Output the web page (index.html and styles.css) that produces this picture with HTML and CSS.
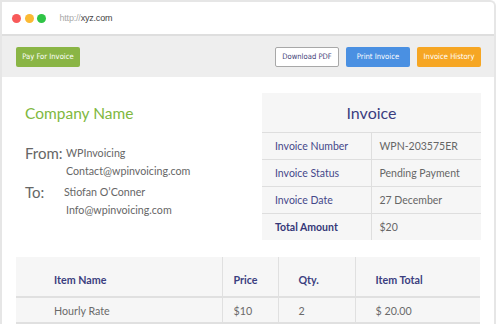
FILE: index.html
```html
<!DOCTYPE html>
<html>
    <head>
        <meta name="viewport" content="width=device-width, initial-scale=1.0">
        <link rel="stylesheet" href="styles.css">
    </head>
    <body>
        <div class="window">
            <div class="titlebar">
                <span class="dot red"></span>
                <span class="dot yellow"></span>
                <span class="dot green"></span>
                <span class="url"><span class="proto">http://</span>xyz.com</span>
            </div>

            <div class="toolbar">
                <button class="btn btn-pay">Pay For Invoice</button>
                <div class="actions">
                    <button class="btn btn-pdf">Download PDF</button>
                    <button class="btn btn-print">Print Invoice</button>
                    <button class="btn btn-history">Invoice History</button>
                </div>
            </div>

            <div class="content">
                <div class="top">
                    <div class="company">
                        <h2>Company Name</h2>
                        <div class="party from">
                            <span class="label">From:</span>
                            <div class="lines">
                                <p>WPInvoicing</p>
                                <p>Contact@wpinvoicing.com</p>
                            </div>
                        </div>
                        <div class="party to">
                            <span class="label">To:</span>
                            <div class="lines">
                                <p>Stiofan O’Conner</p>
                                <p>Info@wpinvoicing.com</p>
                            </div>
                        </div>
                    </div>

                    <table class="invoice">
                        <tr><th colspan="2">Invoice</th></tr>
                        <tr><td class="key">Invoice Number</td><td>WPN-203575ER</td></tr>
                        <tr><td class="key">Invoice Status</td><td>Pending Payment</td></tr>
                        <tr><td class="key">Invoice Date</td><td>27 December</td></tr>
                        <tr><td class="key total">Total Amount</td><td>$20</td></tr>
                    </table>
                </div>

                <table class="items">
                    <tr>
                        <th class="c-name">Item Name</th>
                        <th class="c-price">Price</th>
                        <th class="c-qty">Qty.</th>
                        <th class="c-total">Item Total</th>
                    </tr>
                    <tr>
                        <td class="c-name">Hourly Rate</td>
                        <td class="c-price">$10</td>
                        <td class="c-qty">2</td>
                        <td class="c-total">$ 20.00</td>
                    </tr>
                    <tr>
                        <td class="c-name">&nbsp;</td>
                        <td class="c-price"></td>
                        <td class="c-qty"></td>
                        <td class="c-total"></td>
                    </tr>
                </table>
            </div>
        </div>
    </body>
</html>
```

FILE: styles.css
```css
* {
    margin: 0;
    padding: 0;
    box-sizing: border-box;
}
body {
    margin: 0;
    font-family: Lato, "Open Sans", sans-serif;
    background: #fff;
    overflow: hidden;
}
.window {
    width: 496px;
    height: 340px;
    border: 2px solid #e6e6e6;
    border-bottom: none;
    border-top-right-radius: 6px;
    overflow: hidden;
    background: #fff;
}
.titlebar {
    height: 34px;
    display: flex;
    align-items: center;
    padding-left: 10px;
    border-bottom: 2px solid #dedede;
}
.dot {
    width: 9px;
    height: 9px;
    border-radius: 50%;
    margin-right: 3.5px;
}
.red { background: #f85a5a; }
.yellow { background: #fbb933; }
.green { background: #2fc446; }
.url {
    margin-left: 10px;
    font-family: "Liberation Sans", Arial, sans-serif;
    font-size: 9px;
    color: #444;
    letter-spacing: -0.2px;
}
.proto {
    color: #aaa;
}
.toolbar {
    height: 41px;
    background: #eeeeee;
    display: flex;
    justify-content: space-between;
    align-items: center;
    padding: 0 13px 0 14px;
}
.actions {
    display: flex;
    gap: 7px;
}
.btn {
    width: 64px;
    height: 20px;
    border-radius: 2px;
    font-family: "Liberation Sans Narrow", "DejaVu Sans Condensed", sans-serif;
    font-size: 7.6px;
    color: #fff;
    border: none;
}
.btn-pay { background: #8ab545; }
.btn-pdf {
    background: #fff;
    color: #3f4177;
    border: 1px solid #a8a8a8;
}
.btn-print { background: #4a90e2; }
.btn-history { background: #f6a623; }

.content {
    padding: 16px 13px 0 14px;
}
.top {
    display: flex;
    justify-content: space-between;
}
.company {
    padding: 10px 0 0 9px;
}
.company h2 {
    font-weight: normal;
    font-size: 15.5px;
    color: #80b83e;
    line-height: 20px;
    margin-bottom: 21px;
}
.party {
    display: flex;
    color: #666;
}
.party .label {
    font-size: 15px;
    width: 41px;
    line-height: 18px;
}
.party.to {
    margin-top: 3px;
}
.party.to .lines {
    margin-left: -2px;
}
.party.to .lines p:last-child {
    margin-left: 2px;
}
.lines p {
    font-size: 10.7px;
    line-height: 18px;
    color: #666;
}
.invoice {
    width: 219px;
    border-collapse: collapse;
    background: #f6f6f6;
    font-size: 10.5px;
}
.invoice th {
    height: 39px;
    font-weight: normal;
    font-size: 16px;
    color: #3b3e80;
    border-bottom: 1px solid #dedede;
}
.invoice td {
    height: 27px;
    padding-left: 8px;
    color: #666;
    border-bottom: 1px solid #dedede;
    padding-top: 1px;
}
.invoice td.key {
    width: 109px;
    padding-left: 13px;
    color: #45488a;
    border-right: 1px solid #dedede;
}
.invoice td.total {
    font-weight: bold;
    color: #353878;
}
.invoice tr:last-child td {
    border-bottom: none;
}

.items {
    width: 464px;
    margin-top: 17px;
    border-collapse: collapse;
    background: #f6f6f6;
    font-size: 10.7px;
}
.items th {
    height: 40px;
    text-align: left;
    color: #3b3e80;
    padding-top: 5px;
    border-bottom: 2px solid #e0e0e0;
    border-right: 1px solid #e0e0e0;
}
.items td {
    height: 26px;
    color: #6a6a6a;
    border-bottom: 2px solid #e0e0e0;
    border-right: 1px solid #e0e0e0;
}
.items .c-name { width: 206px; padding-left: 38px; }
.items .c-price { width: 56px; padding-left: 11px; }
.items .c-qty { width: 77px; padding-left: 20px; }
.items .c-total { padding-left: 20px; border-right: none; }
```
